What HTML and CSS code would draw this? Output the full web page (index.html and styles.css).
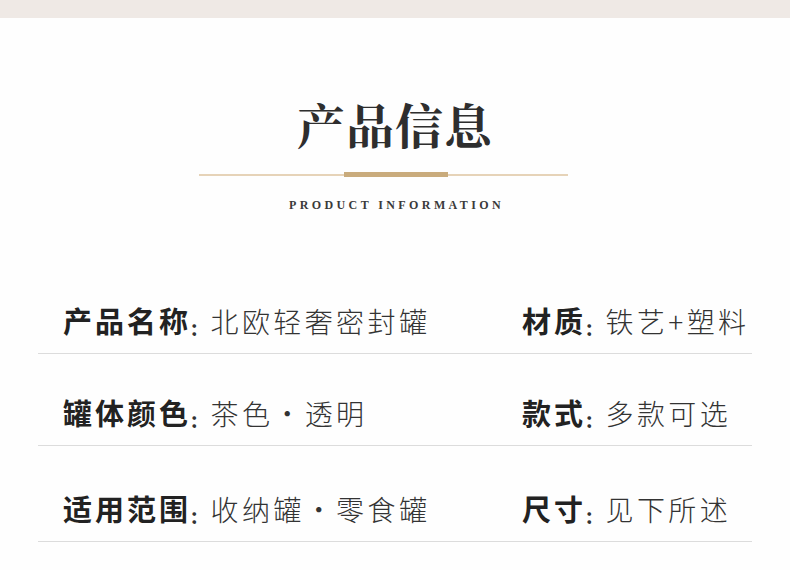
FILE: index.html
```html
<!DOCTYPE html>
<html>
<head>
<meta charset="utf-8">
<link rel="stylesheet" href="styles.css">
</head>
<body>
<div class="topbar"></div>
<header class="head">
  <h1 class="title">产品信息</h1>
  <div class="rule"><span class="thin left"></span><span class="thick"></span><span class="thin right"></span></div>
  <p class="sub">PRODUCT INFORMATION</p>
</header>
<section class="info">
  <div class="row">
    <div class="cell"><b class="lab">产品名称</b><span class="colon">:</span><span class="val">北欧轻奢密封罐</span></div>
    <div class="cell"><b class="lab">材质</b><span class="colon">:</span><span class="val">铁艺+塑料</span></div>
  </div>
  <div class="row">
    <div class="cell"><b class="lab">罐体颜色</b><span class="colon">:</span><span class="val">茶色・透明</span></div>
    <div class="cell"><b class="lab">款式</b><span class="colon">:</span><span class="val">多款可选</span></div>
  </div>
  <div class="row">
    <div class="cell"><b class="lab">适用范围</b><span class="colon">:</span><span class="val">收纳罐・零食罐</span></div>
    <div class="cell"><b class="lab">尺寸</b><span class="colon">:</span><span class="val">见下所述</span></div>
  </div>
</section>
</body>
</html>
```
FILE: styles.css
```css
html, body { margin: 0; padding: 0; background: #fefefe; }
body { width: 790px; height: 570px; overflow: hidden; font-family: "Noto Sans CJK SC", "Noto Sans", sans-serif; color: #333; }
.topbar { height: 18px; background: #efe9e5; }
.head { display: flex; flex-direction: column; align-items: center; }
.title { margin: 78px 0 0; font-size: 48px; line-height: 56px; font-weight: 700; font-family: "Noto Serif CJK SC", "Noto Sans CJK SC", serif; color: #2e2e2e; letter-spacing: 1px; }
.rule { margin-top: 20px; margin-left: 1px; display: flex; align-items: center; transform: translateX(-12px); }
.thin { height: 2px; background: #e6d3b8; }
.thin.left { width: 145px; }
.thin.right { width: 120px; }
.thick { width: 104px; height: 5px; background: #c9ab7c; }
.sub { margin: 21px 0 0; font-family: "Liberation Serif", serif; font-size: 12px; font-weight: 700; line-height: 14px; letter-spacing: 3.4px; color: #3a3a3a; padding-left: 3px; }
.info { margin: 46px 38px 0; }
.row { display: grid; grid-template-columns: 459px 1fr; padding: 40px 0 13px 25px; border-bottom: 1.5px solid #dcdcdc; }
.row:first-child { padding-top: 42px; }
.row:nth-child(2) { padding-top: 38px; }
.row:nth-child(3) { padding-top: 42px; }
.cell { display: flex; align-items: baseline; height: 40px; line-height: 40px; white-space: nowrap; }
.lab { font-size: 29px; font-weight: 700; color: #222; letter-spacing: 3px; }
.colon { font-size: 20px; font-weight: 700; color: #333; margin: 0 13px 0 0; position: relative; top: 3px; }
.val { font-size: 28px; font-weight: 300; color: #333; letter-spacing: 3.4px; }
```
